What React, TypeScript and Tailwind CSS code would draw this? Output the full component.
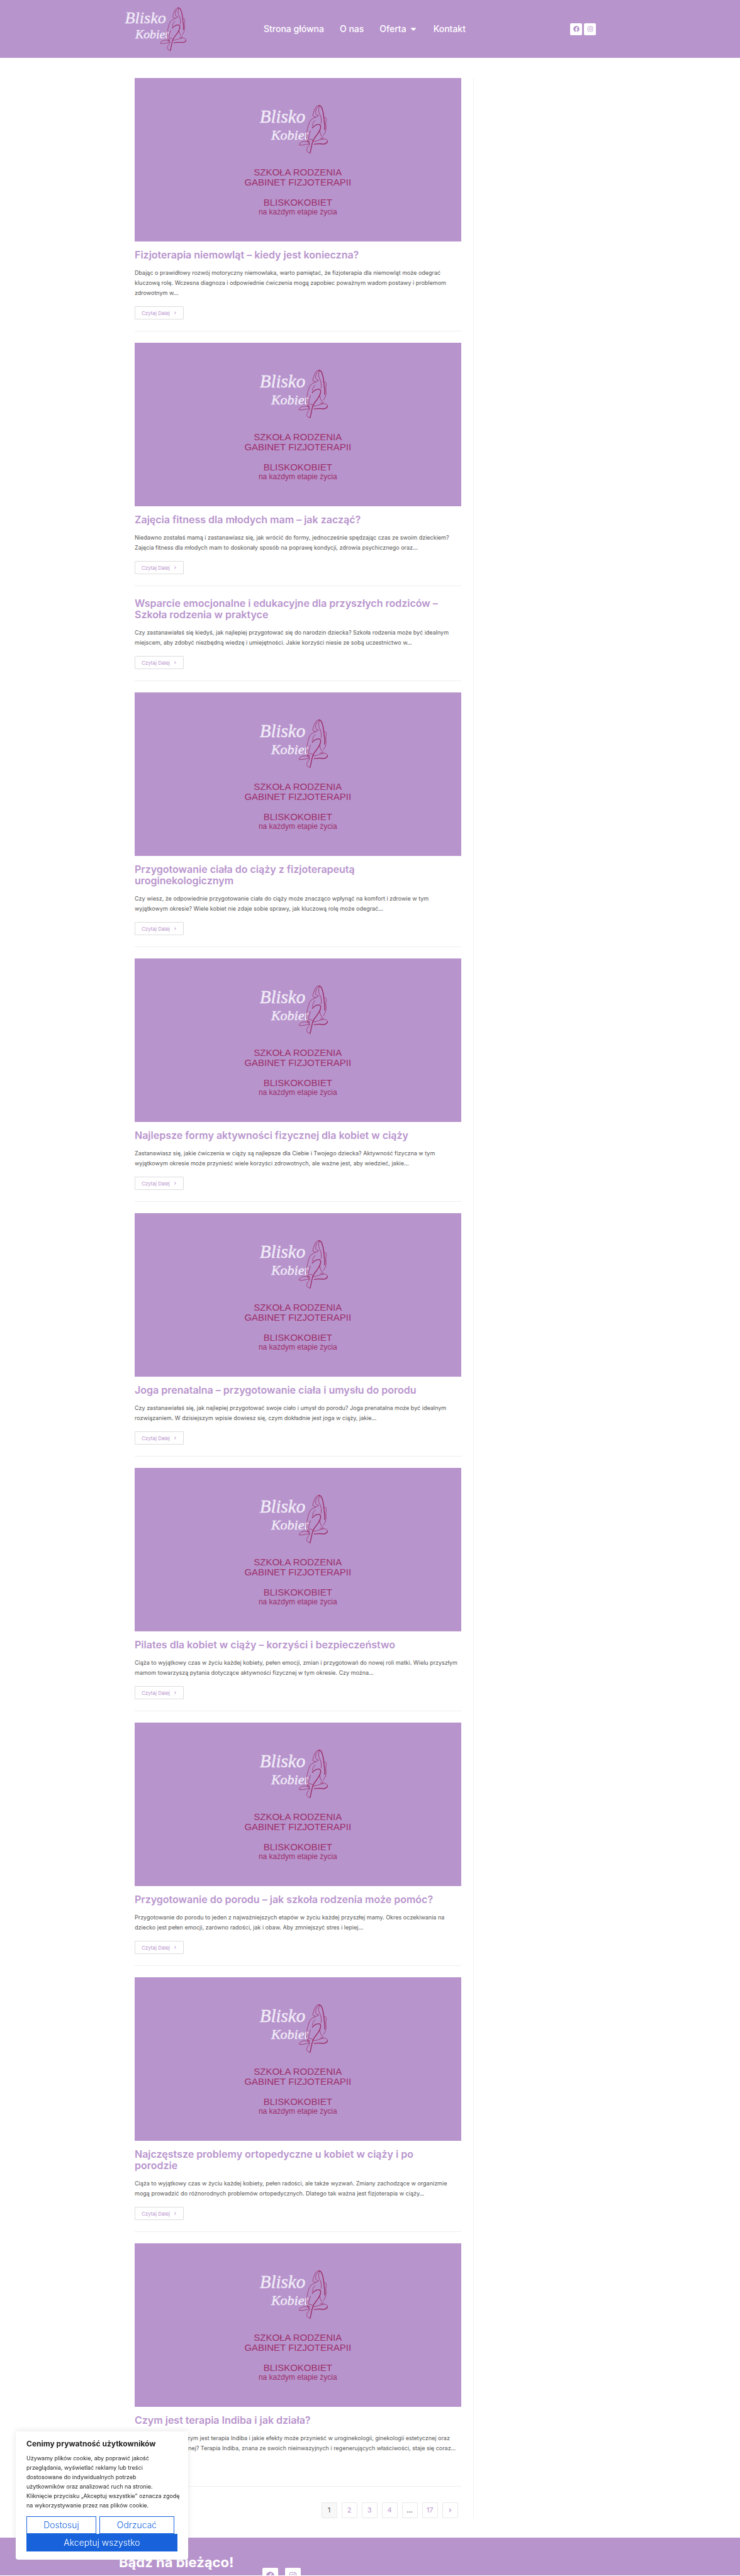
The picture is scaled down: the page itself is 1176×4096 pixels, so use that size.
import { FaCaretDown, FaFacebook, FaInstagram, FaChevronRight } from "react-icons/fa";

type Post = { title: string[]; excerpt: string[]; image?: boolean };

const posts: Post[] = [
  {
    title: ["Fizjoterapia niemowląt – kiedy jest konieczna?"],
    excerpt: [
      "Dbając o prawidłowy rozwój motoryczny niemowlaka, warto pamiętać, że fizjoterapia dla niemowląt może odegrać",
      "kluczową rolę. Wczesna diagnoza i odpowiednie ćwiczenia mogą zapobiec poważnym wadom postawy i problemom",
      "zdrowotnym w…",
    ],
  },
  {
    title: ["Zajęcia fitness dla młodych mam – jak zacząć?"],
    excerpt: [
      "Niedawno zostałaś mamą i zastanawiasz się, jak wrócić do formy, jednocześnie spędzając czas ze swoim dzieckiem?",
      "Zajęcia fitness dla młodych mam to doskonały sposób na poprawę kondycji, zdrowia psychicznego oraz…",
    ],
  },
  {
    image: false,
    title: ["Wsparcie emocjonalne i edukacyjne dla przyszłych rodziców –", "Szkoła rodzenia w praktyce"],
    excerpt: [
      "Czy zastanawiałaś się kiedyś, jak najlepiej przygotować się do narodzin dziecka? Szkoła rodzenia może być idealnym",
      "miejscem, aby zdobyć niezbędną wiedzę i umiejętności. Jakie korzyści niesie ze sobą uczestnictwo w…",
    ],
  },
  {
    title: ["Przygotowanie ciała do ciąży z fizjoterapeutą", "uroginekologicznym"],
    excerpt: [
      "Czy wiesz, że odpowiednie przygotowanie ciała do ciąży może znacząco wpłynąć na komfort i zdrowie w tym",
      "wyjątkowym okresie? Wiele kobiet nie zdaje sobie sprawy, jak kluczową rolę może odegrać…",
    ],
  },
  {
    title: ["Najlepsze formy aktywności fizycznej dla kobiet w ciąży"],
    excerpt: [
      "Zastanawiasz się, jakie ćwiczenia w ciąży są najlepsze dla Ciebie i Twojego dziecka? Aktywność fizyczna w tym",
      "wyjątkowym okresie może przynieść wiele korzyści zdrowotnych, ale ważne jest, aby wiedzieć, jakie…",
    ],
  },
  {
    title: ["Joga prenatalna – przygotowanie ciała i umysłu do porodu"],
    excerpt: [
      "Czy zastanawiałaś się, jak najlepiej przygotować swoje ciało i umysł do porodu? Joga prenatalna może być idealnym",
      "rozwiązaniem. W dzisiejszym wpisie dowiesz się, czym dokładnie jest joga w ciąży, jakie…",
    ],
  },
  {
    title: ["Pilates dla kobiet w ciąży – korzyści i bezpieczeństwo"],
    excerpt: [
      "Ciąża to wyjątkowy czas w życiu każdej kobiety, pełen emocji, zmian i przygotowań do nowej roli matki. Wielu przyszłym",
      "mamom towarzyszą pytania dotyczące aktywności fizycznej w tym okresie. Czy można…",
    ],
  },
  {
    title: ["Przygotowanie do porodu – jak szkoła rodzenia może pomóc?"],
    excerpt: [
      "Przygotowanie do porodu to jeden z najważniejszych etapów w życiu każdej przyszłej mamy. Okres oczekiwania na",
      "dziecko jest pełen emocji, zarówno radości, jak i obaw. Aby zmniejszyć stres i lepiej…",
    ],
  },
  {
    title: ["Najczęstsze problemy ortopedyczne u kobiet w ciąży i po", "porodzie"],
    excerpt: [
      "Ciąża to wyjątkowy czas w życiu każdej kobiety, pełen radości, ale także wyzwań. Zmiany zachodzące w organizmie",
      "mogą prowadzić do różnorodnych problemów ortopedycznych. Dlatego tak ważna jest fizjoterapia w ciąży…",
    ],
  },
  {
    title: ["Czym jest terapia Indiba i jak działa?"],
    excerpt: [
      "Zastanawiasz się, czym jest terapia Indiba i jakie efekty może przynieść w uroginekologii, ginekologii estetycznej oraz",
      "medycynie estetycznej? Terapia Indiba, znana ze swoich nieinwazyjnych i regenerujących właściwości, staje się coraz…",
    ],
  },
];

function Logo({ className, viewBox }: { className: string; viewBox: string }) {
  return (
    <svg className={className} viewBox={viewBox} role="img" aria-label="Blisko Kobiet">
      <g fill="#f1edf8" stroke="#f1edf8" strokeWidth="2" fontFamily="'Liberation Serif', serif" fontStyle="italic">
        <text x="308" y="334" fontSize="140">
          Blisko
        </text>
        <text x="396" y="464" fontSize="106">
          Kobiet
        </text>
      </g>
      <g fill="none" stroke="#9b2f68" strokeLinecap="round" strokeLinejoin="round" strokeWidth="4">
        <path d="M748 205C729 220 721 252 714 279C716 290 727 287 736 290" />
        <path d="M757 208C741 222 733 247 738 266C743 280 752 274 759 281C745 292 716 299 698 315C683 337 675 372 669 408C662 447 671 482 689 498" />
        <path d="M765 208C756 237 758 251 768 270C779 290 783 317 778 340" />
        <path d="M733 318C716 327 717 344 711 358M697 396C688 420 683 440 683 460C694 465 707 458 714 470" />
        <path d="M803 294C814 289 819 302 817 316C809 340 820 365 815 388C811 408 804 420 796 431" />
        <path d="M768 398C770 420 779 437 796 453C785 459 777 451 771 455" />
        <path d="M678 466C681 483 689 486 691 497M692 478C672 486 657 473 638 480C619 485 611 494 611 506C634 511 658 499 690 498" />
        <path d="M720 479C746 477 767 463 797 460C814 457 829 466 827 477" />
        <path d="M689 505C675 519 665 539 669 549C673 562 687 564 694 568" />
      </g>
      <g fill="none" stroke="#9b2f68" strokeLinecap="round" strokeLinejoin="round" strokeWidth="7">
        <path d="M757 204C774 198 784 218 790 242C799 272 799 301 804 340C807 360 809 372 804 388" />
        <path d="M711 374C727 354 753 344 769 350C782 361 772 391 755 416C739 441 719 456 712 486C705 515 699 542 695 565" />
        <path d="M827 478C822 496 799 500 779 497C758 494 742 499 726 499" />
      </g>
    </svg>
  );
}

function PostImage() {
  return (
    <div className="flex flex-col items-center bg-[#b894cd] pt-[41px] pb-10 font-['Liberation_Sans',sans-serif] text-[15px] leading-4 text-[#9b2f68]">
      <Logo className="mb-5 h-[81px] w-[125px]" viewBox="300 190 602 390" />
      <p>SZKOŁA RODZENIA</p>
      <p>GABINET FIZJOTERAPII</p>
      <p className="mt-4">BLISKOKOBIET</p>
      <p className="text-xs leading-[14px]">na każdym etapie życia</p>
    </div>
  );
}

function Lines({ lines }: { lines: string[] }) {
  return (
    <>
      {lines.map((line) => (
        <span key={line} className="block whitespace-nowrap">
          {line}
        </span>
      ))}
    </>
  );
}

function PostCard({ post }: { post: Post }) {
  const hasImage = post.image !== false;
  return (
    <article className="mb-[18px] border-b border-[#eeeeee] pb-[18px]">
      {hasImage && <PostImage />}
      <h2 className={`text-base leading-[18px] font-semibold text-[#b894cd] ${hasImage ? "mt-3" : ""}`}>
        <a href="#post">
          <Lines lines={post.title} />
        </a>
      </h2>
      <p className="mt-3 text-[9px] leading-4 text-[#555555]">
        <Lines lines={post.excerpt} />
      </p>
      <a
        href="#post"
        className="mt-[13px] flex h-[21px] w-[78px] items-center justify-center gap-[6px] rounded-[1px] border border-[#dddddd] text-[8px] text-[#b894cd]"
      >
        Czytaj Dalej
        <FaChevronRight className="size-[5px]" />
      </a>
    </article>
  );
}

const pageBox = "flex size-[25px] items-center justify-center rounded-[1px] border border-[#e9e9e9]";

export default function App() {
  return (
    <div className="min-h-screen bg-white font-['Inter',sans-serif]">
      <header className="bg-[#b894cd]">
        <div className="mx-auto flex h-[92px] max-w-[798px] items-center pr-10 pl-2">
          <a href="#home">
            <Logo className="h-[73px] w-[101px]" viewBox="300 190 540 390" />
          </a>
          <nav className="ml-[121px] flex gap-[25px] text-sm font-medium text-white">
            <a href="#home">Strona główna</a>
            <a href="#about">O nas</a>
            <a href="#offer" className="flex items-center gap-1">
              Oferta
              <FaCaretDown className="size-[14px]" />
            </a>
            <a href="#contact">Kontakt</a>
          </nav>
          <div className="ml-auto flex gap-[3px] text-[#b894cd]">
            <a href="#facebook" aria-label="Facebook" className="flex size-[19px] items-center justify-center rounded-[2px] bg-white">
              <FaFacebook className="size-[10px]" />
            </a>
            <a href="#instagram" aria-label="Instagram" className="flex size-[19px] items-center justify-center rounded-[2px] bg-white">
              <FaInstagram className="size-[10px]" />
            </a>
          </div>
        </div>
      </header>

      <div className="mx-auto max-w-[748px] pt-8 pb-[31px]">
        <main className="w-[72%] border-r border-[#f1f1f1] pr-[19px]">
          {posts.map((post) => (
            <PostCard key={post.title[0]} post={post} />
          ))}
          <nav aria-label="Strony" className="mt-[25px] flex justify-end gap-[7px] pr-[5px] text-[11px] text-[#b894cd]">
            <span aria-current="page" className={`${pageBox} bg-[#f8f8f8] text-[#555555]`}>1</span>
            <a href="#page-2" className={pageBox}>2</a>
            <a href="#page-3" className={pageBox}>3</a>
            <a href="#page-4" className={pageBox}>4</a>
            <span className={`${pageBox} text-[#333333]`}>…</span>
            <a href="#page-17" className={pageBox}>17</a>
            <a href="#next" aria-label="Następna strona" className={pageBox}>
              <FaChevronRight className="size-[7px]" />
            </a>
          </nav>
        </main>
      </div>

      <footer className="h-[60px] overflow-hidden bg-[#b894cd]">
        <div className="mx-auto flex max-w-[798px] items-start">
          <h2 className="mt-[26px] w-[228px] text-[22px] leading-[26px] font-bold whitespace-nowrap text-white">Bądź na bieżąco!</h2>
          <div className="mt-12 flex gap-[11px] text-[#b894cd]">
            <a href="#facebook" aria-label="Facebook" className="flex size-[25px] items-center justify-center rounded-[2px] bg-white">
              <FaFacebook className="size-[13px]" />
            </a>
            <a href="#instagram" aria-label="Instagram" className="flex size-[25px] items-center justify-center rounded-[2px] bg-white">
              <FaInstagram className="size-[13px]" />
            </a>
          </div>
        </div>
      </footer>

      <section
        aria-label="Zgoda na pliki cookie"
        className="fixed bottom-[26px] left-[25px] w-[274px] rounded-[4px] bg-white px-[17px] pt-3 pb-[13px] text-[#212121] shadow-[0_-1px_8px_rgba(172,171,171,0.3)]"
      >
        <h2 className="text-xs leading-4 font-bold">Cenimy prywatność użytkowników</h2>
        <p className="mt-[7px] text-[9px] leading-[15px]">
          <Lines
            lines={[
              "Używamy plików cookie, aby poprawić jakość",
              "przeglądania, wyświetlać reklamy lub treści",
              "dostosowane do indywidualnych potrzeb",
              "użytkowników oraz analizować ruch na stronie.",
              "Kliknięcie przycisku „Akceptuj wszystkie” oznacza zgodę",
              "na wykorzystywanie przez nas plików cookie.",
            ]}
          />
        </p>
        <div className="mt-[10px] flex gap-[5px] pr-[5px] text-sm font-light text-[#1863dc]">
          <button type="button" className="h-7 w-[111px] border border-[#1863dc]">Dostosuj</button>
          <button type="button" className="h-7 flex-1 border border-[#1863dc]">Odrzucać</button>
        </div>
        <button type="button" className="h-7 w-full bg-[#1863dc] text-sm font-light text-white">Akceptuj wszystko</button>
      </section>
    </div>
  );
}
